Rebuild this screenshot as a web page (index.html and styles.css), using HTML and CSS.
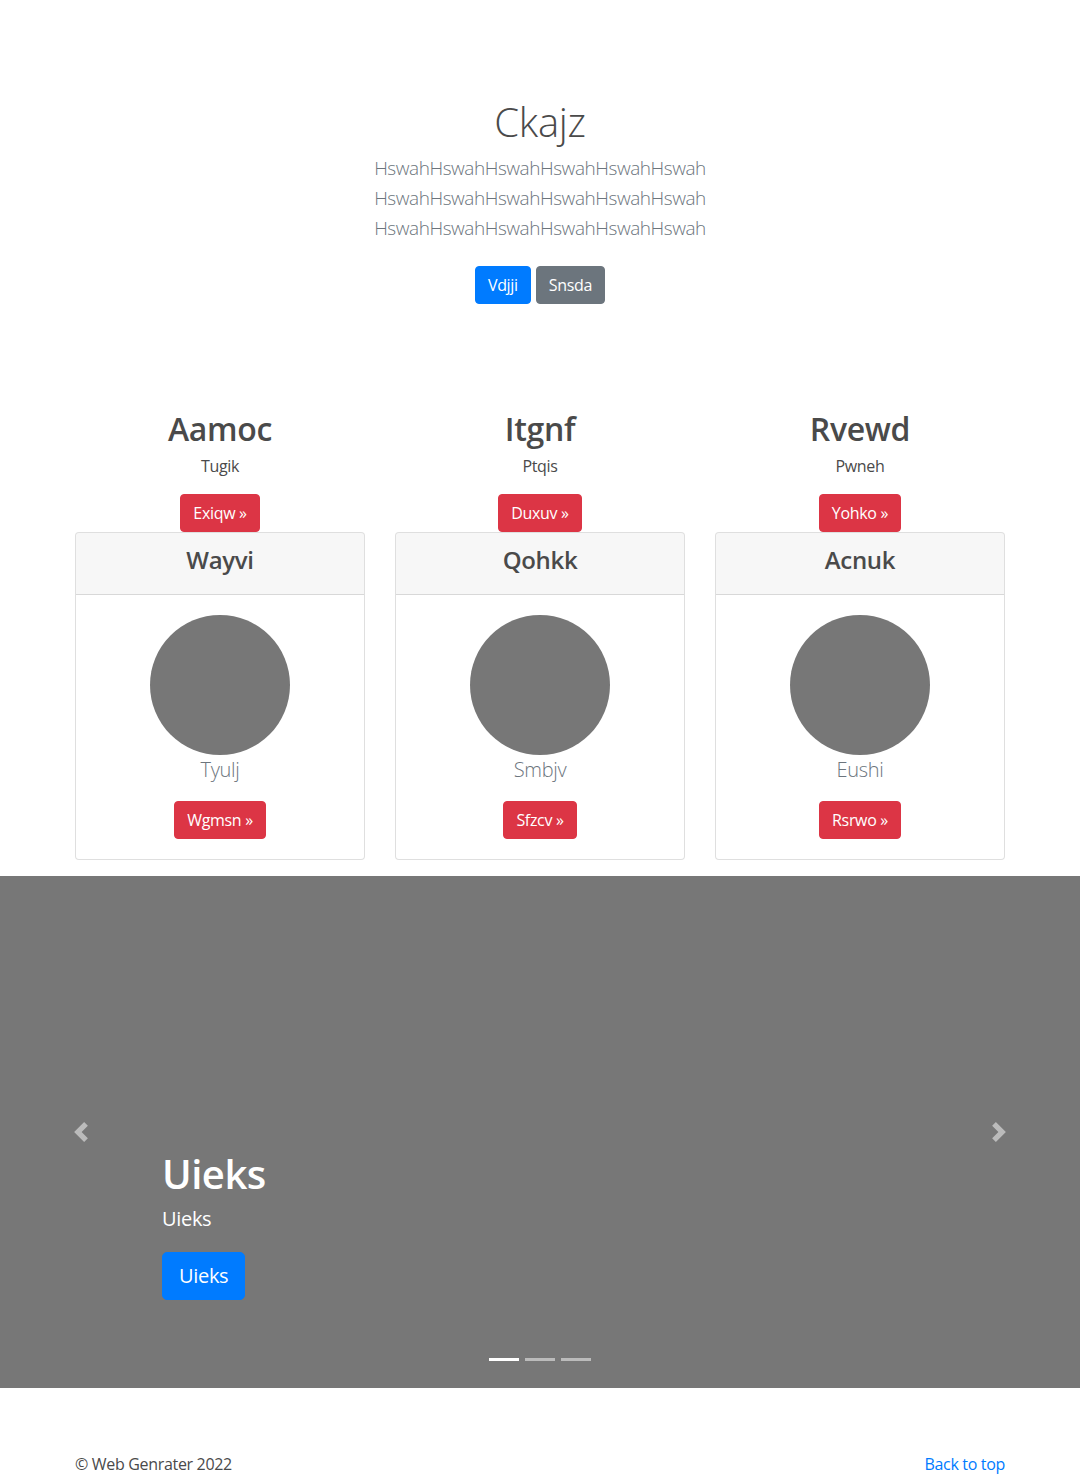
FILE: index.html
```
<!DOCTYPE html>
<html lang="en">
<head>
<meta charset="utf-8">
<title>Ckajz</title>
<link rel="stylesheet" href="styles.css">
</head>
<body>
<section class="hero">
  <h1 class="hero-title">Ckajz</h1>
  <p class="lead muted hero-lead">HswahHswahHswahHswahHswahHswah<br>HswahHswahHswahHswahHswahHswah<br>HswahHswahHswahHswahHswahHswah</p>
  <div class="hero-actions">
    <a href="#" class="btn btn-primary">Vdjji</a>
    <a href="#" class="btn btn-secondary">Snsda</a>
  </div>
</section>

<section class="features">
  <div class="feature-grid">
    <div class="feature">
      <h2 class="feature-title">Aamoc</h2>
      <p class="feature-text">Tugik</p>
      <div class="feature-action"><a href="#" class="btn btn-danger">Exiqw &raquo;</a></div>
      <div class="card">
        <div class="card-header"><h4 class="card-title">Wayvi</h4></div>
        <div class="card-body">
          <div class="avatar"></div>
          <p class="lead muted card-lead">Tyulj</p>
          <a href="#" class="btn btn-danger">Wgmsn &raquo;</a>
        </div>
      </div>
    </div>
    <div class="feature">
      <h2 class="feature-title">Itgnf</h2>
      <p class="feature-text">Ptqis</p>
      <div class="feature-action"><a href="#" class="btn btn-danger">Duxuv &raquo;</a></div>
      <div class="card">
        <div class="card-header"><h4 class="card-title">Qohkk</h4></div>
        <div class="card-body">
          <div class="avatar"></div>
          <p class="lead muted card-lead">Smbjv</p>
          <a href="#" class="btn btn-danger">Sfzcv &raquo;</a>
        </div>
      </div>
    </div>
    <div class="feature">
      <h2 class="feature-title">Rvewd</h2>
      <p class="feature-text">Pwneh</p>
      <div class="feature-action"><a href="#" class="btn btn-danger">Yohko &raquo;</a></div>
      <div class="card">
        <div class="card-header"><h4 class="card-title">Acnuk</h4></div>
        <div class="card-body">
          <div class="avatar"></div>
          <p class="lead muted card-lead">Eushi</p>
          <a href="#" class="btn btn-danger">Rsrwo &raquo;</a>
        </div>
      </div>
    </div>
  </div>
</section>

<section class="carousel">
  <ol class="carousel-indicators">
    <li class="indicator active"></li>
    <li class="indicator"></li>
    <li class="indicator"></li>
  </ol>
  <div class="carousel-caption">
    <h1 class="caption-title">Uieks</h1>
    <p class="caption-text">Uieks</p>
    <p class="caption-action"><a href="#" class="btn btn-primary btn-lg">Uieks</a></p>
  </div>
  <a href="#" class="carousel-control control-prev" aria-label="Previous">
    <svg class="control-icon" viewBox="0 0 8 8" width="20" height="20"><path fill="#fff" d="M5.25 0l-4 4 4 4 1.5-1.5-2.5-2.5 2.5-2.5-1.5-1.5z"/></svg>
  </a>
  <a href="#" class="carousel-control control-next" aria-label="Next">
    <svg class="control-icon" viewBox="0 0 8 8" width="20" height="20"><path fill="#fff" d="M2.75 0l-1.5 1.5 2.5 2.5-2.5 2.5 1.5 1.5 4-4-4-4z"/></svg>
  </a>
</section>

<footer class="footer">
  <p class="footer-copy">&copy; Web Genrater 2022</p>
  <p class="footer-top"><a href="#">Back to top</a></p>
</footer>
</body>
</html>
```
FILE: styles.css
```
* { box-sizing: border-box; }

body {
  margin: 0;
  font-family: "Open Sans", "Noto Sans", "Liberation Sans", sans-serif;
  font-size: 16px;
  line-height: 1.5;
  letter-spacing: -0.02em;
  color: #4a4a4a;
  background: #fff;
}

a { text-decoration: none; }

.muted { color: #6c757d; }

.lead {
  font-size: 20px;
  font-weight: 300;
  line-height: 30px;
}

.btn {
  display: inline-block;
  font-size: 16px;
  line-height: 24px;
  padding: 6px 12px;
  border: 1px solid transparent;
  border-radius: 4px;
  color: #fff;
  font-weight: 400;
  text-align: center;
}
.btn-primary { background: #007bff; border-color: #007bff; }
.btn-secondary { background: #6c757d; border-color: #6c757d; }
.btn-danger { background: #dc3545; border-color: #dc3545; }
.btn-lg { font-size: 20px; line-height: 30px; padding: 8px 16px; border-radius: 5px; }

/* hero */
.hero {
  text-align: center;
  padding: 98px 15px 106px;
}
.hero-title {
  margin: 0;
  font-size: 40px;
  line-height: 48px;
  font-weight: 300;
  color: #4a4a4a;
}
.hero-lead {
  margin: 7px 0 0;
  font-size: 19px;
  letter-spacing: -0.45px;
}
.hero-actions {
  margin-top: 23px;
  display: flex;
  justify-content: center;
  gap: 5px;
}

/* features */
.features {
  width: 960px;
  margin: 0 auto;
  padding: 0 15px 16px;
}
.feature-grid {
  display: grid;
  grid-template-columns: repeat(3, 1fr);
  column-gap: 30px;
}
.feature { text-align: center; }
.feature-title {
  margin: 0;
  font-size: 32px;
  line-height: 38px;
  font-weight: 600;
  color: #4a4a4a;
}
.feature-text {
  margin: 6px 0 16px;
  font-size: 16px;
  line-height: 24px;
}
.feature-action { display: flex; justify-content: center; }

.card {
  border: 1px solid rgba(0,0,0,.125);
  border-radius: 4px;
  background: #fff;
  overflow: hidden;
}
.card-header {
  background: rgba(0,0,0,.03);
  border-bottom: 1px solid rgba(0,0,0,.125);
  padding: 12px 20px;
}
.card-title {
  margin: 0 0 8px;
  font-size: 24px;
  line-height: 29px;
  font-weight: 600;
  color: #4a4a4a;
}
.card-body {
  padding: 20px;
  display: flex;
  flex-direction: column;
  align-items: center;
}
.avatar {
  width: 140px;
  height: 140px;
  border-radius: 50%;
  background: #777;
}
.card-lead { margin: 0 0 16px; }

/* carousel */
.carousel {
  position: relative;
  height: 512px;
  background: #777;
  overflow: hidden;
}
.carousel-caption {
  position: absolute;
  left: 15%;
  right: 15%;
  bottom: 52px;
  padding: 20px 0;
  color: #fff;
  text-align: left;
}
.caption-title {
  margin: 0 0 6px;
  font-size: 40px;
  line-height: 48px;
  font-weight: 600;
  letter-spacing: -0.5px;
}
.caption-text {
  margin: 0 0 18px;
  font-size: 20px;
  line-height: 30px;
}
.caption-action { margin: 0 0 16px; display: flex; }

.carousel-control {
  position: absolute;
  top: 0;
  bottom: 0;
  width: 15%;
  display: flex;
  align-items: center;
  justify-content: center;
  opacity: .5;
}
.control-prev { left: 0; }
.control-next { right: 0; }
.control-icon { display: block; }

.carousel-indicators {
  position: absolute;
  left: 0;
  right: 0;
  bottom: 27px;
  margin: 0;
  padding: 0;
  list-style: none;
  display: flex;
  justify-content: center;
  gap: 6px;
}
.indicator {
  width: 30px;
  height: 3px;
  background: #fff;
  opacity: .5;
}
.indicator.active { opacity: 1; }

/* footer */
.footer {
  width: 960px;
  margin: 64px auto 0;
  padding: 0 15px;
  display: flex;
  justify-content: space-between;
}
.footer p { margin: 0 0 16px; line-height: 24px; }
.footer-copy { color: #4a4a4a; }
.footer-top a { color: #007bff; }
```
